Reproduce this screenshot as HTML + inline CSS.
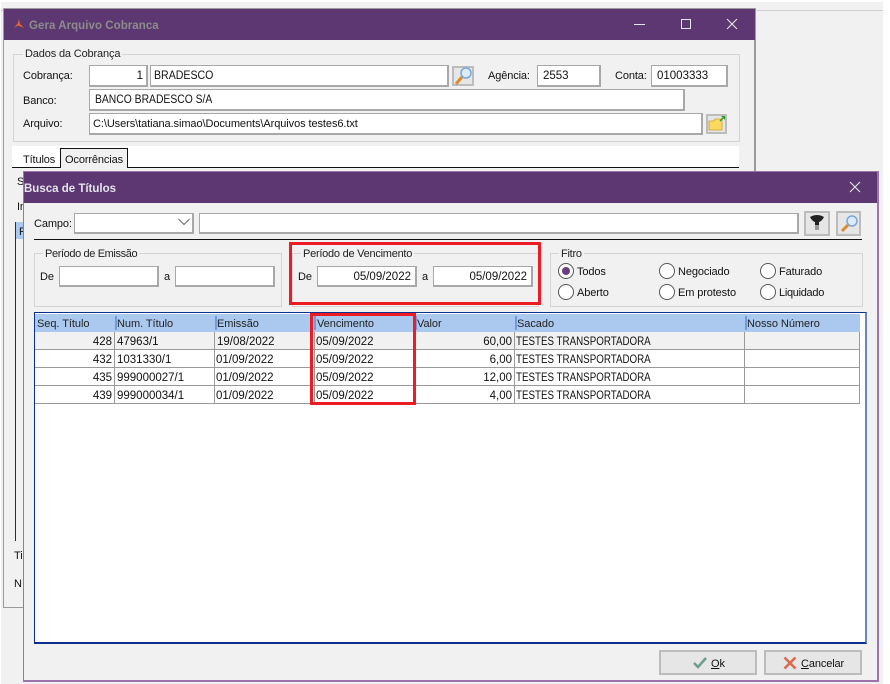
<!DOCTYPE html>
<html><head><meta charset="utf-8">
<style>
*{box-sizing:border-box}
html,body{margin:0;padding:0;width:890px;height:684px;overflow:hidden;background:#fff}
body{position:relative;font-family:"Liberation Sans",sans-serif;font-size:11px;color:#111}
div,span.t,span.l,svg{position:absolute}
.t{white-space:nowrap;line-height:14px;height:14px;margin-top:1px;letter-spacing:-.12px}
.i{background:#fff;border:1px solid #a8a8a8;border-width:1px 2px 2px 1px;white-space:nowrap;line-height:20px;padding:0 3px;overflow:hidden}
.n{font-size:11.5px}
.g{border:1px solid #d4d4d4}
.l{background:#f1f1f1;padding:0 2px;line-height:12px;height:12px;white-space:nowrap;color:#222;letter-spacing:-.25px}
.b{background:#e6e6e6;border:2px solid #bcbcbc}
.r{width:16px;height:16px;border:1.5px solid #555;border-radius:50%;background:#fff}
.v{position:absolute;background:#9a9a9a;width:1px;top:332px;height:72px}
.h{position:absolute;background:#9a9a9a;height:1px;left:35px;width:825px}
.c{position:absolute;height:14px;line-height:14px;white-space:nowrap;color:#111;margin-top:1px;font-size:11.5px}
.u{transform:scaleX(.85);transform-origin:0 0}
.sq{display:inline-block;font-size:11.5px;transform-origin:0 0}
.hd{position:absolute;top:316px;height:14px;line-height:14px;white-space:nowrap;color:#222;margin-top:1px;letter-spacing:-.05px}
.s{position:absolute;top:316px;width:1.5px;height:14px;background:#6f9be0}
.red{border:3px solid #ed1c24;background:transparent}
</style></head><body>
<div style="left:1px;top:2px;width:882px;height:682px;background:#f1f1f1"></div>
<div style="left:755px;top:10px;width:128px;height:1px;background:#cfcfcf"></div>
<div style="left:1px;top:10px;width:3px;height:1px;background:#cfcfcf"></div>

<!-- outer window -->
<div style="left:3px;top:8px;width:753px;height:600px;border:1px solid #9a9a9a;border-width:1px 2px 1px 1px;background:#f1f1f1"></div>
<div style="left:4px;top:9px;width:751px;height:31px;background:#5c3771"></div>
<svg style="left:13px;top:18px" width="12" height="12" viewBox="0 0 12 12"><path d="M6 1 L5 5 L1 10 L5 7.5 L11 10 L7 6 Z" fill="#e8692c"/></svg>
<span class="t" style="left:29px;top:18px;color:#8c8c8c;font-weight:bold;font-size:11.5px;letter-spacing:.05px">Gera Arquivo Cobranca</span>
<div style="left:634px;top:24px;width:11px;height:1px;background:#e6e6e6"></div>
<div style="left:681px;top:19px;width:10px;height:10px;border:1px solid #e6e6e6"></div>
<svg style="left:726px;top:18px" width="12" height="12" viewBox="0 0 12 12"><path d="M1 1L11 11M11 1L1 11" stroke="#e6e6e6" stroke-width="1.1"/></svg>

<div class="g" style="left:13px;top:54px;width:727px;height:88px"></div>
<span class="l" style="left:23px;top:48px;letter-spacing:-.15px">Dados da Cobrança</span>
<span class="t" style="left:23px;top:68px">Cobrança:</span>
<div class="i" style="left:89px;top:65px;width:59px;height:22px;text-align:right"><span class="n">1</span></div>
<div class="i" style="left:150px;top:65px;width:299px;height:22px"><span class="sq" style="transform:scaleX(.92)">BRADESCO</span></div>
<div class="b" style="left:452px;top:66px;width:22px;height:20px"></div>
<svg style="left:453px;top:66px" width="20" height="20" viewBox="0 0 20 20"><path d="M3 18L9 11" stroke="#d98a2b" stroke-width="3"/><circle cx="13" cy="7" r="5" fill="#dcebfa" stroke="#7ba6d8" stroke-width="1.5"/></svg>
<span class="t" style="left:488px;top:68px">Agência:</span>
<div class="i" style="left:537px;top:65px;width:64px;height:22px;padding-left:5px"><span class="n">2553</span></div>
<span class="t" style="left:615px;top:68px">Conta:</span>
<div class="i" style="left:651px;top:65px;width:77px;height:22px;padding-left:5px"><span class="n">01003333</span></div>
<span class="t" style="left:23px;top:93px">Banco:</span>
<div class="i" style="left:89px;top:89px;width:596px;height:22px;padding-left:5px"><span class="sq" style="transform:scaleX(.9)">BANCO BRADESCO S/A</span></div>
<span class="t" style="left:23px;top:116px">Arquivo:</span>
<div class="i" style="left:89px;top:113px;width:614px;height:22px;letter-spacing:-.08px">C:\Users\tatiana.simao\Documents\Arquivos testes6.txt</div>
<div class="b" style="left:706px;top:114px;width:21px;height:20px"></div>
<svg style="left:708px;top:115px" width="18" height="17" viewBox="0 0 18 17"><path d="M1 6H6L7 4H14V15H1Z" fill="#fbd95e" stroke="#c9a227" stroke-width=".8"/><path d="M13 1L17 1L17 5Z" fill="#2c9a2c"/><path d="M12 6L15 3" stroke="#2c9a2c" stroke-width="1.3"/></svg>

<div style="left:12px;top:146px;width:727px;height:21px;background:#fff"></div>
<div style="left:12px;top:167px;width:727px;height:1px;background:#111"></div>
<span class="t" style="left:23px;top:152px">Títulos</span>
<div style="left:60px;top:148px;width:68px;height:20px;border:1px solid #111;background:#f1f1f1;border-width:1px 1px 0 1px"></div>
<span class="t" style="left:65px;top:152px">Ocorrências</span>
<span class="t" style="left:17px;top:174px">S</span>
<span class="t" style="left:17px;top:199px">In</span>
<div style="left:15px;top:222px;width:1px;height:319px;background:#0b2f8f"></div>
<div style="left:16px;top:222px;width:8px;height:17px;background:#abc9ee"></div>
<span class="t" style="left:19px;top:224px">F</span>
<span class="t" style="left:14px;top:548px">Ti</span>
<span class="t" style="left:14px;top:576px">N</span>

<!-- dialog -->
<div style="left:23px;top:171px;width:856px;height:511px;background:#f1f1f1;border:1px solid #9a75ad;border-width:1px 2px 2px 1px"></div>
<div style="left:24px;top:172px;width:853px;height:31px;background:#5c3771"></div>
<span class="t" style="left:24px;top:181px;color:#e4e4ec;font-weight:bold;font-size:11.5px;letter-spacing:0">Busca de Títulos</span>
<svg style="left:849px;top:181px" width="12" height="12" viewBox="0 0 12 12"><path d="M1 1L11 11M11 1L1 11" stroke="#e6e6e6" stroke-width="1.1"/></svg>

<span class="t" style="left:34px;top:216px">Campo:</span>
<div class="i" style="left:74px;top:213px;width:120px;height:21px"></div>
<svg style="left:178px;top:218px" width="12" height="8" viewBox="0 0 12 8"><path d="M.5 1L6 6.5L11.5 1" fill="none" stroke="#666" stroke-width="1"/></svg>
<div class="i" style="left:199px;top:213px;width:600px;height:21px"></div>
<div class="b" style="left:804px;top:211px;width:26px;height:25px"></div>
<svg style="left:809px;top:214px" width="16" height="18" viewBox="0 0 16 18"><path d="M1 3Q8 -1 15 3Q13 7 10 8V15L6 16V8Q3 7 1 3Z" fill="#222"/><rect x="6" y="11" width="4" height="5" fill="#999"/></svg>
<div class="b" style="left:836px;top:211px;width:25px;height:25px"></div>
<svg style="left:839px;top:214px" width="20" height="19" viewBox="0 0 20 19"><path d="M3 17L9 11" stroke="#d98a2b" stroke-width="3"/><circle cx="13" cy="7" r="5" fill="#dcebfa" stroke="#7ba6d8" stroke-width="1.5"/></svg>
<div style="left:34px;top:239px;width:828px;height:1px;background:#111"></div>

<div class="g" style="left:34px;top:253px;width:248px;height:54px"></div>
<span class="l" style="left:43px;top:248px;letter-spacing:-.38px">Período de Emissão</span>
<span class="t" style="left:40px;top:269px">De</span>
<div class="i" style="left:59px;top:266px;width:100px;height:21px"></div>
<span class="t" style="left:164px;top:269px">a</span>
<div class="i" style="left:175px;top:266px;width:100px;height:21px"></div>

<div class="g" style="left:292px;top:253px;width:247px;height:54px"></div>
<span class="l" style="left:301px;top:248px">Período de Vencimento</span>
<span class="t" style="left:298px;top:269px">De</span>
<div class="i" style="left:317px;top:266px;width:100px;height:21px;text-align:right;padding-right:4px"><span class="n">05/09/2022</span></div>
<span class="t" style="left:422px;top:269px">a</span>
<div class="i" style="left:433px;top:266px;width:100px;height:21px;text-align:right;padding-right:4px"><span class="n">05/09/2022</span></div>
<div class="red" style="left:289px;top:242px;width:252px;height:63px"></div>

<div class="g" style="left:550px;top:253px;width:313px;height:54px"></div>
<span class="l" style="left:559px;top:248px">Fitro</span>
<div class="r" style="left:558px;top:263px"></div>
<div style="left:562px;top:267px;width:8px;height:8px;border-radius:50%;background:#6a3f80"></div>
<span class="t" style="left:577px;top:264px">Todos</span>
<div class="r" style="left:558px;top:284px"></div>
<span class="t" style="left:577px;top:285px">Aberto</span>
<div class="r" style="left:659px;top:263px"></div>
<span class="t" style="left:678px;top:264px">Negociado</span>
<div class="r" style="left:659px;top:284px"></div>
<span class="t" style="left:678px;top:285px">Em protesto</span>
<div class="r" style="left:760px;top:263px"></div>
<span class="t" style="left:779px;top:264px">Faturado</span>
<div class="r" style="left:760px;top:284px"></div>
<span class="t" style="left:779px;top:285px;letter-spacing:-.3px">Liquidado</span>

<!-- grid -->
<div style="left:34px;top:312px;width:833px;height:332px;background:#fff;border:1px solid #0b2f8f;border-right-color:#6b86c4;border-width:1px 2px 2px 1px"></div>
<div style="left:35px;top:314px;width:825px;height:18px;background:#abc9ee"></div>
<div style="left:35px;top:332px;width:825px;height:17px;background:#f1f1f1"></div>
<div class="s" style="left:115px"></div><div class="s" style="left:215px"></div><div class="s" style="left:314px"></div><div class="s" style="left:415px"></div><div class="s" style="left:515px"></div><div class="s" style="left:745px"></div>
<span class="hd" style="left:37px">Seq. Título</span>
<span class="hd" style="left:117px">Num. Título</span>
<span class="hd" style="left:217px">Emissão</span>
<span class="hd" style="left:317px">Vencimento</span>
<span class="hd" style="left:417px">Valor</span>
<span class="hd" style="left:517px">Sacado</span>
<span class="hd" style="left:747px">Nosso Número</span>
<div class="h" style="top:349px"></div><div class="h" style="top:367px"></div><div class="h" style="top:385px"></div><div class="h" style="top:403px"></div>
<div class="v" style="left:114px"></div><div class="v" style="left:214px"></div><div class="v" style="left:314px"></div><div class="v" style="left:414px"></div><div class="v" style="left:514px"></div><div class="v" style="left:744px"></div><div class="v" style="left:859px"></div>

<span class="c" style="left:60px;width:52px;top:334px;text-align:right">428</span><span class="c" style="left:117px;top:334px">47963/1</span><span class="c" style="left:217px;top:334px">19/08/2022</span><span class="c" style="left:316px;top:334px">05/09/2022</span><span class="c" style="left:450px;width:62px;top:334px;text-align:right">60,00</span><span class="c u" style="left:516px;top:334px">TESTES TRANSPORTADORA</span>
<span class="c" style="left:60px;width:52px;top:352px;text-align:right">432</span><span class="c" style="left:117px;top:352px">1031330/1</span><span class="c" style="left:216px;top:352px">01/09/2022</span><span class="c" style="left:316px;top:352px">05/09/2022</span><span class="c" style="left:450px;width:62px;top:352px;text-align:right">6,00</span><span class="c u" style="left:516px;top:352px">TESTES TRANSPORTADORA</span>
<span class="c" style="left:60px;width:52px;top:370px;text-align:right">435</span><span class="c" style="left:117px;top:370px">999000027/1</span><span class="c" style="left:216px;top:370px">01/09/2022</span><span class="c" style="left:316px;top:370px">05/09/2022</span><span class="c" style="left:450px;width:62px;top:370px;text-align:right">12,00</span><span class="c u" style="left:516px;top:370px">TESTES TRANSPORTADORA</span>
<span class="c" style="left:60px;width:52px;top:388px;text-align:right">439</span><span class="c" style="left:117px;top:388px">999000034/1</span><span class="c" style="left:216px;top:388px">01/09/2022</span><span class="c" style="left:316px;top:388px">05/09/2022</span><span class="c" style="left:450px;width:62px;top:388px;text-align:right">4,00</span><span class="c u" style="left:516px;top:388px">TESTES TRANSPORTADORA</span>
<div class="red" style="left:310px;top:313px;width:106px;height:92px"></div>

<div class="b" style="left:659px;top:650px;width:98px;height:25px"></div>
<svg style="left:693px;top:656px" width="14" height="13" viewBox="0 0 14 13"><path d="M1 7L5 11L13 2" fill="none" stroke="#6f9f8c" stroke-width="2.6"/></svg>
<span class="t" style="left:711px;top:656px"><u>O</u>k</span>
<div class="b" style="left:764px;top:650px;width:98px;height:25px"></div>
<svg style="left:783px;top:656px" width="14" height="14" viewBox="0 0 14 14"><path d="M1.5 1.5L12.5 12.5M12.5 1.5L1.5 12.5" stroke="#d9694f" stroke-width="2.6"/></svg>
<span class="t" style="left:801px;top:656px"><u>C</u>ancelar</span>
</body></html>
